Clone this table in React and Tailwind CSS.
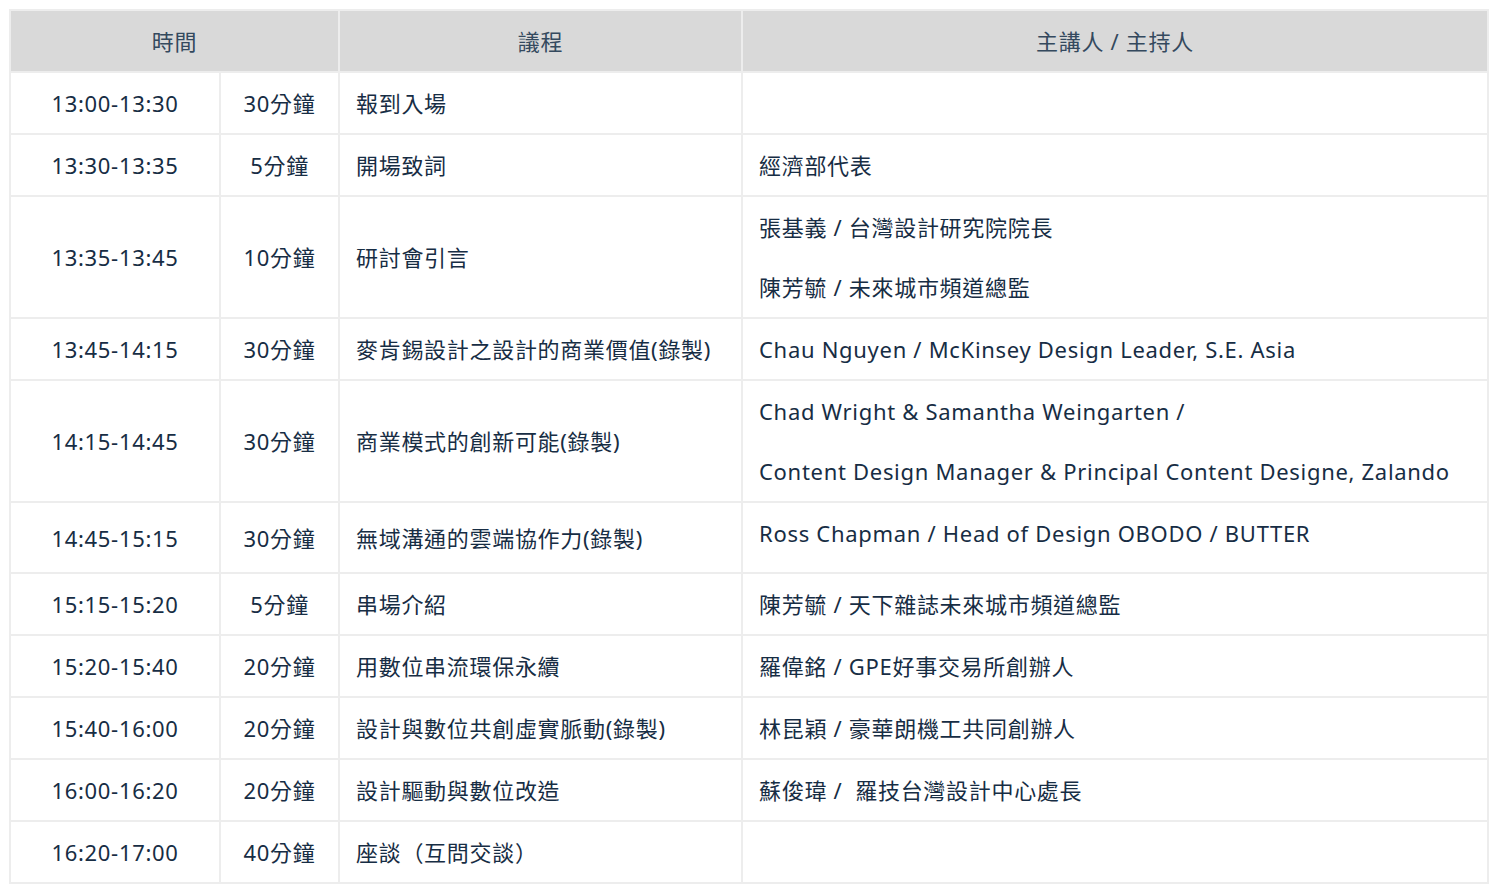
const rows = [
  { time: "13:00-13:30", dur: "30分鐘", topic: "報到入場", who: [] },
  { time: "13:30-13:35", dur: "5分鐘", topic: "開場致詞", who: ["經濟部代表"] },
  {
    time: "13:35-13:45",
    dur: "10分鐘",
    topic: "研討會引言",
    who: ["張基義 / 台灣設計研究院院長", "陳芳毓 / 未來城市頻道總監"],
  },
  {
    time: "13:45-14:15",
    dur: "30分鐘",
    topic: "麥肯錫設計之設計的商業價值(錄製)",
    who: ["Chau Nguyen / McKinsey Design Leader, S.E. Asia"],
  },
  {
    time: "14:15-14:45",
    dur: "30分鐘",
    topic: "商業模式的創新可能(錄製)",
    who: [
      "Chad Wright & Samantha Weingarten /",
      "Content Design Manager & Principal Content Designe, Zalando",
    ],
  },
  {
    time: "14:45-15:15",
    dur: "30分鐘",
    topic: "無域溝通的雲端協作力(錄製)",
    who: ["Ross Chapman / Head of Design OBODO / BUTTER"],
    extra: true,
  },
  { time: "15:15-15:20", dur: "5分鐘", topic: "串場介紹", who: ["陳芳毓 / 天下雜誌未來城市頻道總監"] },
  { time: "15:20-15:40", dur: "20分鐘", topic: "用數位串流環保永續", who: ["羅偉銘 / GPE好事交易所創辦人"] },
  { time: "15:40-16:00", dur: "20分鐘", topic: "設計與數位共創虛實脈動(錄製)", who: ["林昆穎 / 豪華朗機工共同創辦人"] },
  { time: "16:00-16:20", dur: "20分鐘", topic: "設計驅動與數位改造", who: ["蘇俊瑋 /  羅技台灣設計中心處長"] },
  { time: "16:20-17:00", dur: "40分鐘", topic: "座談（互問交談）", who: [] },
];

export default function App() {
  const cell = "border-2 border-[#ededed] align-middle leading-[60px] p-0";
  return (
    <div
      className="bg-white min-h-[889px] pt-[9px] pl-[9px] text-[#172d44]"
      style={{ fontFamily: '"Noto Sans", "Noto Sans CJK TC", sans-serif' }}
    >
      <table className="table-fixed border-collapse w-[1478px] text-[22px] tracking-[0.7px]">
        <colgroup>
          <col className="w-[210px]" />
          <col className="w-[119px]" />
          <col className="w-[403px]" />
          <col className="w-[746px]" />
        </colgroup>
        <thead>
          <tr className="bg-[#d9d9d9]">
            <th colSpan={2} className={cell + " font-normal text-center text-[#34495e]"}>
              時間
            </th>
            <th className={cell + " font-normal text-center text-[#34495e]"}>議程</th>
            <th className={cell + " font-normal text-center text-[#34495e]"}>主講人 / 主持人</th>
          </tr>
        </thead>
        <tbody>
          {rows.map((r) => (
            <tr key={r.time}>
              <td className={cell + " text-center"}>{r.time}</td>
              <td className={cell + " text-center"}>{r.dur}</td>
              <td className={cell + " pl-4 whitespace-nowrap"}>{r.topic}</td>
              <td className={cell + " pl-4 whitespace-pre" + (r.extra ? " pb-[9px]" : "")}>
                {r.who.length === 0 && <div>&nbsp;</div>}
                {r.who.map((w) => (
                  <div key={w}>{w}</div>
                ))}
              </td>
            </tr>
          ))}
        </tbody>
      </table>
    </div>
  );
}
